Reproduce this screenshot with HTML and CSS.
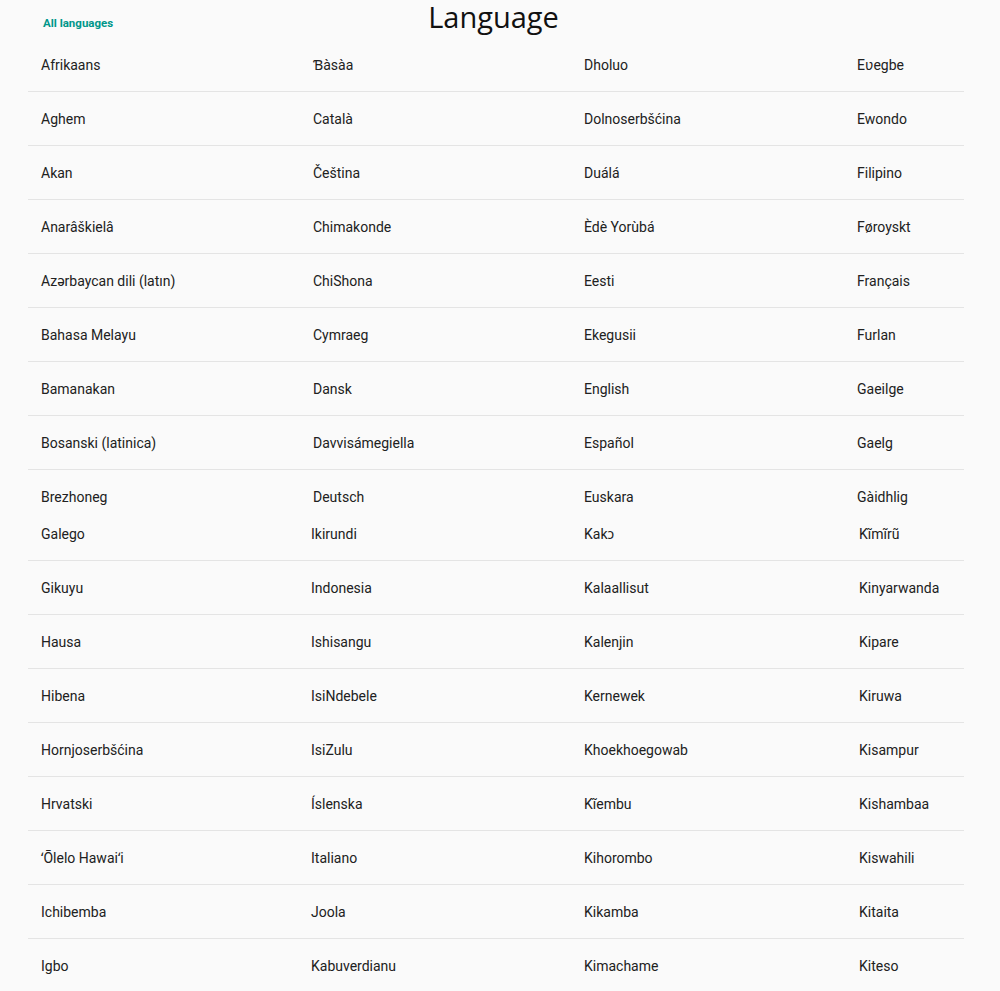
FILE: index.html
```html
<!DOCTYPE html>
<html lang="en">
<head>
    <meta charset="UTF-8">
    <meta name="viewport" content="width=device-width, initial-scale=1.0">
    <title>Language</title>
    <link rel="stylesheet" href="styles.css">
</head>
<body>
    <header class="topbar">
        <div class="crumb">All languages</div>
        <h1>Language</h1>
        <div></div>
    </header>

    <!-- first page of the list -->
    <div class="list">
        <div class="row"><span>Afrikaans</span><span>Ɓàsàa</span><span>Dholuo</span><span>Eʋegbe</span></div>
        <div class="row"><span>Aghem</span><span>Català</span><span>Dolnoserbšćina</span><span>Ewondo</span></div>
        <div class="row"><span>Akan</span><span>Čeština</span><span>Duálá</span><span>Filipino</span></div>
        <div class="row"><span>Anarâškielâ</span><span>Chimakonde</span><span>Èdè Yorùbá</span><span>Føroyskt</span></div>
        <div class="row"><span>Azərbaycan dili (latın)</span><span>ChiShona</span><span>Eesti</span><span>Français</span></div>
        <div class="row"><span>Bahasa Melayu</span><span>Cymraeg</span><span>Ekegusii</span><span>Furlan</span></div>
        <div class="row"><span>Bamanakan</span><span>Dansk</span><span>English</span><span>Gaeilge</span></div>
        <div class="row"><span>Bosanski (latinica)</span><span>Davvisámegiella</span><span>Español</span><span>Gaelg</span></div>
        <div class="row cut"><span>Brezhoneg</span><span>Deutsch</span><span>Euskara</span><span>Gàidhlig</span></div>
    </div>

    <!-- second page of the list -->
    <div class="list next">
        <div class="row"><span>Galego</span><span>Ikirundi</span><span>Kakɔ</span><span>Kĩmĩrũ</span></div>
        <div class="row"><span>Gikuyu</span><span>Indonesia</span><span>Kalaallisut</span><span>Kinyarwanda</span></div>
        <div class="row"><span>Hausa</span><span>Ishisangu</span><span>Kalenjin</span><span>Kipare</span></div>
        <div class="row"><span>Hibena</span><span>IsiNdebele</span><span>Kernewek</span><span>Kiruwa</span></div>
        <div class="row"><span>Hornjoserbšćina</span><span>IsiZulu</span><span>Khoekhoegowab</span><span>Kisampur</span></div>
        <div class="row"><span>Hrvatski</span><span>Íslenska</span><span>Kĩembu</span><span>Kishambaa</span></div>
        <div class="row"><span>ʻŌlelo Hawaiʻi</span><span>Italiano</span><span>Kihorombo</span><span>Kiswahili</span></div>
        <div class="row"><span>Ichibemba</span><span>Joola</span><span>Kikamba</span><span>Kitaita</span></div>
        <div class="row"><span>Igbo</span><span>Kabuverdianu</span><span>Kimachame</span><span>Kiteso</span></div>
    </div>
</body>
</html>
```

FILE: styles.css
```css
body {
    margin: 0;
    background: #fafafa;
    font-family: Roboto, "Noto Sans", sans-serif;
    color: #212121;
}

.topbar {
    height: 38px;
    display: grid;
    grid-template-columns: 1fr auto 1fr;
    align-items: start;
    padding-right: 13px;
}

.crumb {
    padding: 15px 0 0 43px;
    font-size: 11.5px;
    font-weight: 700;
    color: #00968a;
    line-height: 16px;
}

h1 {
    margin: 0;
    padding-top: 1px;
    font-family: "Open Sans", sans-serif;
    font-weight: 400;
    font-size: 29px;
    line-height: 32px;
    color: #111;
}

.list {
    margin: 0 28px;
    width: 936px;
}

.row {
    display: flex;
    height: 54px;
    box-sizing: border-box;
    border-bottom: 1px solid #e4e4e4;
    font-size: 14px;
}

.row span {
    flex: none;
    box-sizing: border-box;
    padding: 1px 0 0 13px;
    line-height: 53px;
    white-space: nowrap;
}

/* column widths of the first page */
.row span:nth-child(1) { width: 272px; }
.row span:nth-child(2) { width: 271px; }
.row span:nth-child(3) { width: 273px; }
.row span:nth-child(4) { width: 120px; }

.row.cut {
    height: 37px;
    border-bottom: none;
}

/* the second page sits a couple of pixels off */
.next .row span:nth-child(1) { width: 270px; }
.next .row span:nth-child(2) { width: 273px; }
.next .row span:nth-child(3) { width: 275px; }
.next .row span:nth-child(4) { width: 118px; }
```
